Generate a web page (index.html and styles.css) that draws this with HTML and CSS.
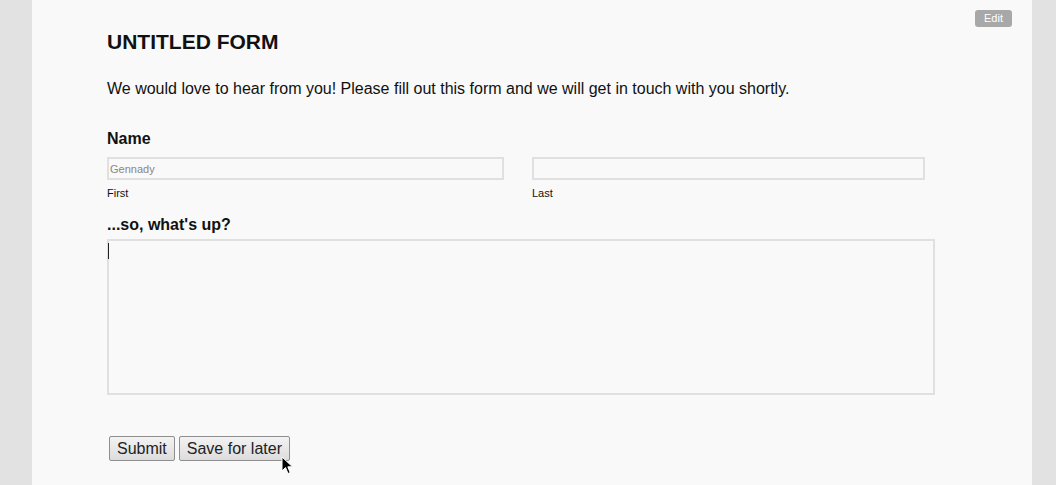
FILE: index.html
```html
<!DOCTYPE html>
<html>
<head>
<meta charset="utf-8">
<link rel="stylesheet" href="styles.css">
</head>
<body>
<div class="page">
  <a class="edit-btn">Edit</a>
  <form class="form">
    <h1 class="title">UNTITLED FORM</h1>
    <p class="intro">We would love to hear from you! Please fill out this form and we will get in touch with you shortly.</p>
    <div class="field">
      <div class="label">Name</div>
      <div class="name-row">
        <div class="name-col first">
          <input class="text-input" type="text" placeholder="Gennady">
          <span class="sub">First</span>
        </div>
        <div class="name-col last">
          <input class="text-input" type="text">
          <span class="sub">Last</span>
        </div>
      </div>
    </div>
    <div class="field">
      <div class="label">...so, what's up?</div>
      <div class="textarea-wrap">
        <textarea class="textarea"></textarea>
        <span class="caret"></span>
      </div>
    </div>
    <div class="actions">
      <button type="button" class="btn">Submit</button>
      <button type="button" class="btn">Save for later</button>
      <svg class="cursor" width="14" height="20" viewBox="0 0 14 20"><path d="M1 1 L1 15 L4.5 11.5 L7 17.5 L9.2 16.6 L6.8 10.8 L11.5 10.8 Z" fill="#000" stroke="#fff" stroke-width="1"/></svg>
    </div>
  </form>
</div>
</body>
</html>
```
FILE: styles.css
```css
html, body {
  margin: 0;
  padding: 0;
  background: #e2e2e2;
  height: 100%;
  overflow: hidden;
}
body {
  font-family: "Liberation Sans", Arial, sans-serif;
  color: #111;
}
.page {
  position: relative;
  width: 1000px;
  margin-left: 32px;
  height: 485px;
  background: #f9f9f9;
  box-sizing: border-box;
  padding: 30px 0 0 75px;
}
.edit-btn {
  position: absolute;
  left: 943px;
  top: 10px;
  width: 37px;
  height: 17px;
  line-height: 17px;
  background: #a8a8a8;
  color: #fff;
  font-size: 11px;
  text-align: center;
  border-radius: 3px;
}
.form {
  margin: 0;
}
.title {
  margin: 0;
  font-size: 21px;
  line-height: 24px;
  font-weight: bold;
  color: #111;
}
.intro {
  margin: 26px 0 0;
  font-size: 16px;
  line-height: 18px;
}
.field {
  margin-top: 32px;
}
.field + .field {
  margin-top: 16px;
}
.label {
  font-size: 16px;
  line-height: 18px;
  font-weight: bold;
}
.name-row {
  display: flex;
  gap: 28px;
  margin-top: 9px;
}
.name-col {
  display: flex;
  flex-direction: column;
}
.name-col.first { width: 397px; }
.name-col.last { width: 393px; }
.text-input {
  box-sizing: border-box;
  width: 100%;
  height: 23px;
  margin: 0;
  border: 2px solid #e0e0e0;
  background: #f9f9f9;
  font-family: "Liberation Sans", Arial, sans-serif;
  font-size: 11px;
  padding: 0 1px;
  outline: none;
}
.text-input::placeholder {
  color: #8c8680;
}
.sub {
  font-size: 11px;
  line-height: 13px;
  margin-top: 7px;
}
.textarea-wrap {
  position: relative;
  margin-top: 5px;
  width: 828px;
  height: 156px;
}
.textarea {
  box-sizing: border-box;
  display: block;
  width: 100%;
  height: 100%;
  margin: 0;
  border: 2px solid #e0e0e0;
  background: #f9f9f9;
  resize: none;
  outline: none;
}
.caret {
  position: absolute;
  left: 1px;
  top: 4px;
  width: 1px;
  height: 16px;
  background: #222;
}
.actions {
  position: relative;
  display: flex;
  gap: 4px;
  margin-top: 41px;
  padding-left: 2px;
}
.btn {
  height: 25px;
  margin: 0;
  padding: 0 7px;
  font-family: "Liberation Sans", Arial, sans-serif;
  font-size: 16px;
  color: #222;
  border: 1px solid #8f8f8f;
  border-radius: 2px;
  background: linear-gradient(#f3f3f3, #dcdcdc);
}
.cursor {
  position: absolute;
  left: 174px;
  top: 20px;
}
```
